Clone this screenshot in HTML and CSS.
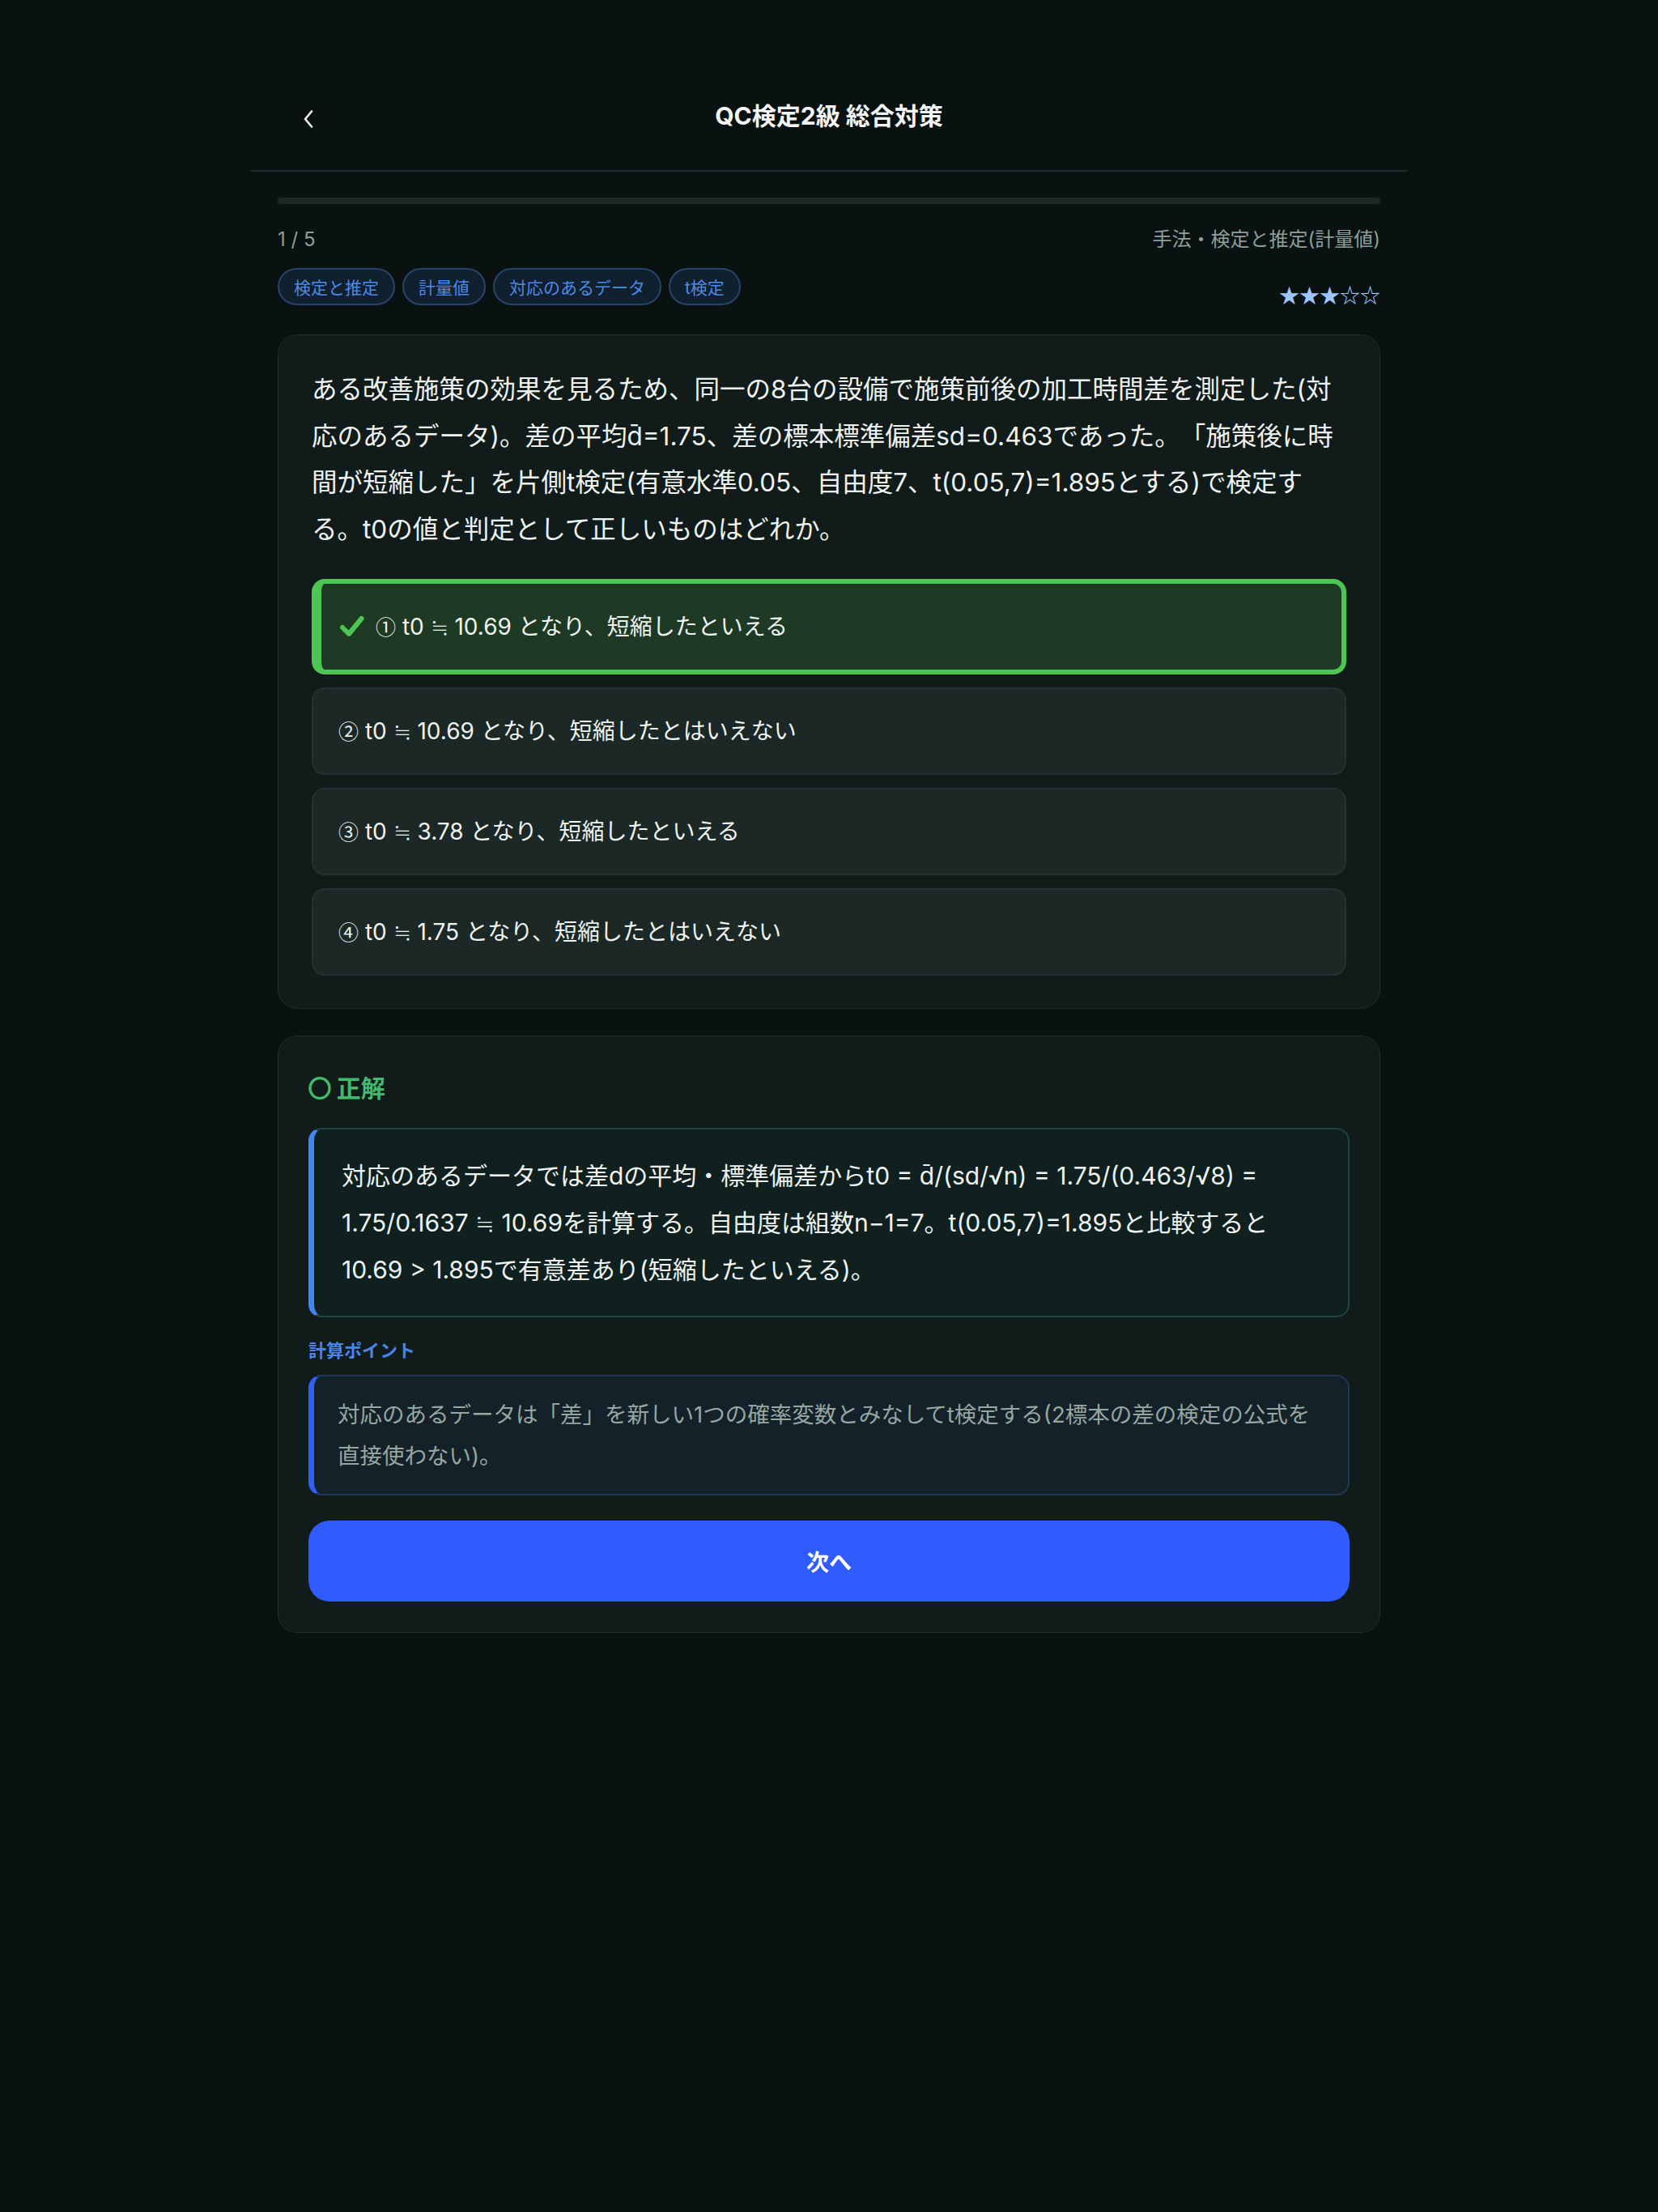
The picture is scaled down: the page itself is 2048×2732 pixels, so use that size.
FILE: index.html
```html
<!DOCTYPE html>
<html lang="ja">
<head>
<meta charset="utf-8">
<title>QC検定2級 総合対策</title>
<link rel="stylesheet" href="styles.css">
</head>
<body>
<div class="app">
  <header class="topbar">
    <button class="back" aria-label="戻る">
      <svg width="12" height="22" viewBox="0 0 12 22"><polyline points="10,1.5 2,11 10,20.5" fill="none" stroke="#f2f5f4" stroke-width="2.6" stroke-linecap="round" stroke-linejoin="round"/></svg>
    </button>
    <h1 class="title">QC検定2級 総合対策</h1>
    <div class="spacer"></div>
  </header>

  <main class="content">
    <div class="progress"><div class="progress-fill"></div></div>

    <div class="meta">
      <span class="count">1 / 5</span>
      <span class="category">手法・検定と推定(計量値)</span>
    </div>

    <div class="tagrow">
      <div class="tags">
        <span class="tag">検定と推定</span>
        <span class="tag">計量値</span>
        <span class="tag">対応のあるデータ</span>
        <span class="tag">t検定</span>
      </div>
      <span class="stars">★★★☆☆</span>
    </div>

    <section class="card question-card">
      <p class="question">ある改善施策の効果を見るため、同一の8台の設備で施策前後の加工時間差を測定した(対応のあるデータ)。差の平均d̄=1.75、差の標本標準偏差sd=0.463であった。「施策後に時間が短縮した」を片側t検定(有意水準0.05、自由度7、t(0.05,7)=1.895とする)で検定する。t0の値と判定として正しいものはどれか。</p>
      <div class="options">
        <div class="option option--correct">
          <svg class="check" width="32" height="30" viewBox="0 0 32 30"><path d="M4 16 L12 24 L27.5 5" fill="none" stroke="#4cc552" stroke-width="6" stroke-linecap="round" stroke-linejoin="round"/></svg>
          <span><span class="num">①</span> t0 ≒ 10.69 となり、短縮したといえる</span>
        </div>
        <div class="option"><span><span class="num">②</span> t0 ≒ 10.69 となり、短縮したとはいえない</span></div>
        <div class="option"><span><span class="num">③</span> t0 ≒ 3.78 となり、短縮したといえる</span></div>
        <div class="option"><span><span class="num">④</span> t0 ≒ 1.75 となり、短縮したとはいえない</span></div>
      </div>
    </section>

    <section class="card result-card">
      <div class="result"><span class="ring">○</span> 正解</div>
      <div class="explain">対応のあるデータでは差dの平均・標準偏差からt0 = d̄/(sd/√n) = 1.75/(0.463/√8) = 1.75/0.1637 ≒ 10.69を計算する。自由度は組数n−1=7。t(0.05,7)=1.895と比較すると10.69 &gt; 1.895で有意差あり(短縮したといえる)。</div>
      <div class="point-label">計算ポイント</div>
      <div class="point">対応のあるデータは「差」を新しい1つの確率変数とみなしてt検定する(2標本の差の検定の公式を直接使わない)。</div>
      <button class="next">次へ</button>
    </section>
  </main>
</div>
</body>
</html>
```

FILE: styles.css
```css
* {
  box-sizing: border-box;
}

html, body {
  margin: 0;
  padding: 0;
  background: #0a1111;
}

body {
  font-family: Inter, "Noto Sans CJK JP", sans-serif;
  color: #e9efed;
  min-height: 2732px;
  text-spacing-trim: space-all;
}

.app {
  width: 1430px;
  margin: 0 auto;
}

/* header */
.topbar {
  display: grid;
  grid-template-columns: 1fr auto 1fr;
  align-items: center;
  padding-top: 76px;
  height: 212px;
  border-bottom: 2px solid #1e2a29;
}

.back {
  justify-self: start;
  background: none;
  border: none;
  padding: 8px 0 0 66px;
  display: flex;
  align-items: center;
  cursor: pointer;
}

.title {
  margin: 0;
  font-size: 30px;
  font-weight: 700;
  color: #f2f5f4;
  line-height: 40px;
}

/* main */
.content {
  padding: 32px 34px 60px;
}

.progress {
  height: 8px;
  border-radius: 4px;
  background: #1b2826;
  overflow: hidden;
}

.progress-fill {
  width: 0;
  height: 100%;
  background: #2f5bff;
}

.meta {
  margin-top: 26px;
  display: flex;
  justify-content: space-between;
  align-items: center;
  font-size: 24px;
  line-height: 36px;
  color: #8c9f99;
}

.tagrow {
  margin-top: 17px;
  display: flex;
  justify-content: space-between;
  align-items: flex-end;
}

.tags {
  display: flex;
  gap: 9px;
}

.tag {
  display: inline-flex;
  align-items: center;
  height: 46px;
  padding: 0 18px;
  border: 2px solid #27446b;
  border-radius: 23px;
  background: #11202e;
  color: #4b8ae8;
  font-size: 21px;
}

.stars {
  font-family: "Noto Sans CJK JP", sans-serif;
  font-size: 25px;
  line-height: 24px;
  color: #9fc5ff;
  margin-bottom: 2px;
}

/* cards */
.card {
  background: #111b1a;
  border: 1px solid #1f2c2a;
  border-radius: 24px;
}

.question-card {
  margin-top: 36px;
  padding: 38px 41px 40px;
}

.question {
  margin: 0;
  font-size: 31.5px;
  line-height: 57.6px;
  color: #eef3f1;
}

.options {
  margin-top: 33px;
  display: flex;
  flex-direction: column;
  gap: 16px;
}

.option {
  display: flex;
  align-items: center;
  gap: 13px;
  height: 108px;
  padding: 0 31px;
  border: 2px solid #233230;
  border-radius: 16px;
  background: #1b2826;
  font-size: 28px;
  line-height: 44px;
  color: #eef3f1;
}

.option--correct {
  height: 118px;
  border: 6px solid #4cc552;
  border-left-width: 12px;
  padding: 0 22px;
  background: #1e3924;
}

.num {
  font-family: "Noto Sans CJK JP", sans-serif;
  font-size: 25px;
  line-height: 1;
}

.check {
  flex: none;
}

/* result card */
.result-card {
  margin-top: 33px;
  padding: 38px 37px;
}

.result {
  font-family: "Noto Sans CJK JP", sans-serif;
  font-size: 30px;
  line-height: 48px;
  font-weight: 700;
  color: #43b96b;
}

.ring {
  font-size: 28px;
  -webkit-text-stroke: 2px #43b96b;
}

.explain {
  margin-top: 26px;
  padding: 28px 34px 28px 34px;
  border: 2px solid #1e463f;
  border-left: 7px solid #4286f5;
  border-radius: 16px;
  background: #0f201f;
  font-size: 30px;
  line-height: 58px;
  color: #eef3f1;
}

.point-label {
  margin-top: 25px;
  font-size: 22px;
  line-height: 32px;
  font-weight: 700;
  color: #4a86e8;
}

.point {
  margin-top: 14px;
  padding: 22px 28px 22px 29px;
  border: 2px solid #1f3858;
  border-left: 7px solid #2f5ff5;
  border-radius: 16px;
  background: #142129;
  font-size: 27.5px;
  line-height: 50.4px;
  color: #95a7a1;
}

.next {
  display: block;
  width: 100%;
  height: 100px;
  margin-top: 31px;
  border: none;
  border-radius: 26px;
  background: #2f5bff;
  color: #ffffff;
  font-family: inherit;
  font-size: 28px;
  font-weight: 700;
  cursor: pointer;
}
```
